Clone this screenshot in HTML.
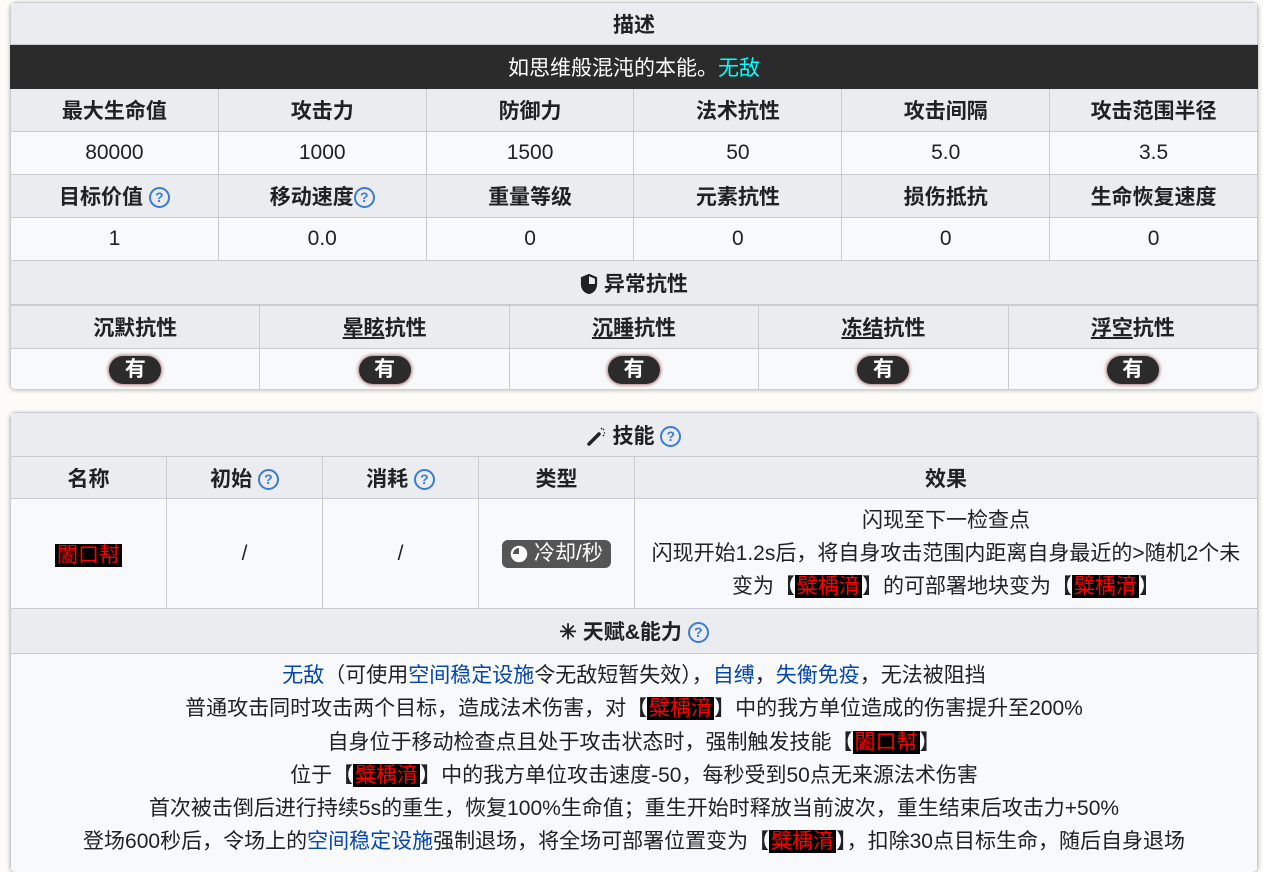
<!DOCTYPE html>
<html><head><meta charset="utf-8"><style>
*{box-sizing:border-box;margin:0;padding:0}
body{width:1263px;height:864px;overflow:hidden;background:#fcfbf7;font-family:"Liberation Sans","Noto Sans CJK SC",sans-serif;color:#202122;font-size:21px}
.panel{position:absolute;left:10px;width:1248px;background:#f8f9fa;border-radius:6px;box-shadow:0 1px 4px rgba(0,0,0,.3);overflow:hidden}
table{border-collapse:collapse;width:100%;table-layout:fixed}
td{border:1px solid #c8ccd1;text-align:center;vertical-align:middle;padding:0;white-space:nowrap}
.h{background:#eaecf0;font-weight:bold}
.q{display:inline-block;width:21px;height:21px;border:2px solid #3a7bd5;border-radius:50%;color:#3a7bd5;font-size:14px;line-height:17px;font-weight:bold;vertical-align:2px;text-align:center}
.you{display:inline-block;background:#2b2b2b;color:#fff;font-weight:bold;border-radius:14px;width:52px;height:28px;line-height:28px;box-shadow:0 0 3px 1px #a77}
.red{background:#000;color:#f00;padding:0 2px}
a{color:#0645ad;text-decoration:none}
u{text-decoration:underline}
</style></head><body>
<div class="panel" style="top:2px;height:387px">
<table>
<tr style="height:42px"><td class="h" colspan="6">描述</td></tr>
<tr style="height:44px"><td colspan="6" style="background:#2b2b2b;color:#fff;border-color:#2b2b2b">如思维般混沌的本能。<span style="color:#0ff">无敌</span></td></tr>
<tr style="height:43px" class="h"><td class="h">最大生命值</td><td class="h">攻击力</td><td class="h">防御力</td><td class="h">法术抗性</td><td class="h">攻击间隔</td><td class="h">攻击范围半径</td></tr>
<tr style="height:43px"><td>80000</td><td>1000</td><td>1500</td><td>50</td><td>5.0</td><td>3.5</td></tr>
<tr style="height:43px"><td class="h">目标价值 <span class="q">?</span></td><td class="h">移动速度<span class="q">?</span></td><td class="h">重量等级</td><td class="h">元素抗性</td><td class="h">损伤抵抗</td><td class="h">生命恢复速度</td></tr>
<tr style="height:43px"><td>1</td><td>0.0</td><td>0</td><td>0</td><td>0</td><td>0</td></tr>
<tr style="height:44px"><td class="h" colspan="6"><svg width="18" height="20" viewBox="0 0 18 20" style="vertical-align:-3px"><path d="M9 1L2 4v6c0 5 3 8 7 9 4-1 7-4 7-9V4z" fill="none" stroke="#202122" stroke-width="2.2"/><path d="M9 2v17c-4-1-7-4-7-9V4z" fill="#202122"/><path d="M9 10h7c0 4-3 8-7 9z" fill="#202122"/></svg> 异常抗性</td></tr>
</table>
<table>
<tr style="height:43px"><td class="h">沉默抗性</td><td class="h"><u>晕眩</u>抗性</td><td class="h"><u>沉睡</u>抗性</td><td class="h"><u>冻结</u>抗性</td><td class="h"><u>浮空</u>抗性</td></tr>
<tr style="height:43px"><td><span class="you">有</span></td><td><span class="you">有</span></td><td><span class="you">有</span></td><td><span class="you">有</span></td><td><span class="you">有</span></td></tr>
</table>
</div>
<div class="panel" style="top:412px;height:460px">
<table>
<colgroup><col style="width:156px"><col style="width:156px"><col style="width:156px"><col style="width:156px"><col></colgroup>
<tr style="height:44px"><td class="h" colspan="5"><svg width="20" height="20" viewBox="0 0 20 20" style="vertical-align:-3px"><path d="M2 18L12 8" stroke="#202122" stroke-width="3.5" stroke-linecap="round"/><path d="M14 2l1 1M17 3l-1 1M18 7l-1 0M16 9l1 1" stroke="#202122" stroke-width="1.5"/></svg> 技能 <span class="q">?</span></td></tr>
<tr style="height:42px"><td class="h">名称</td><td class="h">初始 <span class="q">?</span></td><td class="h">消耗 <span class="q">?</span></td><td class="h">类型</td><td class="h">效果</td></tr>
<tr style="height:110px"><td><span class="red">闔口幇</span></td><td>/</td><td>/</td><td><span style="display:inline-block;background:#555;color:#fff;border-radius:6px;padding:0 8px;line-height:28px"><svg width="18" height="18" viewBox="0 0 18 18" style="vertical-align:-3px"><circle cx="9" cy="9" r="7.5" fill="#fff"/><path d="M9 9V3A6 6 0 0 0 3 9z" fill="#555"/><circle cx="9" cy="9" r="7.5" fill="none" stroke="#fff" stroke-width="1.5"/></svg> 冷却/秒</span></td><td style="line-height:33px">闪现至下一检查点<br>闪现开始1.2s后，将自身攻击范围内距离自身最近的&gt;随机2个未<br>变为【<span class="red">糪楀湇</span>】的可部署地块变为【<span class="red">糪楀湇</span>】</td></tr>
<tr style="height:45px"><td class="h" colspan="5">✳ 天赋&amp;能力 <span class="q">?</span></td></tr>
<tr><td colspan="5" style="line-height:33.3px;padding-top:5px;vertical-align:top;height:220px">
<a>无敌</a>（可使用<a>空间稳定设施</a>令无敌短暂失效），<a>自缚</a>，<a>失衡免疫</a>，无法被阻挡<br>
普通攻击同时攻击两个目标，造成法术伤害，对【<span class="red">糪楀湇</span>】中的我方单位造成的伤害提升至200%<br>
自身位于移动检查点且处于攻击状态时，强制触发技能【<span class="red">闔口幇</span>】<br>
位于【<span class="red">糪楀湇</span>】中的我方单位攻击速度-50，每秒受到50点无来源法术伤害<br>
首次被击倒后进行持续5s的重生，恢复100%生命值；重生开始时释放当前波次，重生结束后攻击力+50%<br>
登场600秒后，令场上的<a>空间稳定设施</a>强制退场，将全场可部署位置变为【<span class="red">糪楀湇</span>】，扣除30点目标生命，随后自身退场
</td></tr>
</table>
</div>
</body></html>
